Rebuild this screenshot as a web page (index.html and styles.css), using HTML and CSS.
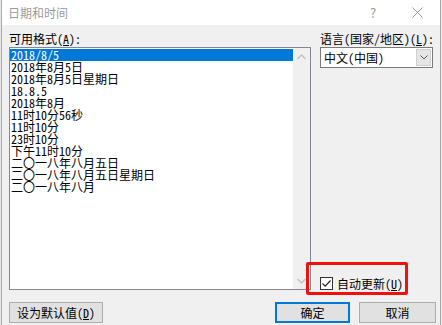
FILE: index.html
```html
<!DOCTYPE html>
<html lang="zh-CN">
<head>
    <meta charset="UTF-8">
    <title>日期和时间</title>
    <link rel="stylesheet" href="styles.css">
</head>
<body>
    <div class="window">
        <div class="titlebar">
            <span class="title">日期和时间</span>
            <span class="help">?</span>
            <span class="close">
                <svg width="11" height="11" viewBox="0 0 11 11"><path d="M0.5 0.5 L10.5 10.5 M10.5 0.5 L0.5 10.5" stroke="#9a9a9a" stroke-width="1" fill="none"/></svg>
            </span>
        </div>

        <div class="content">
            <div class="columns">
                <div class="left">
                    <div class="label">可用格式(<u>A</u>):</div>
                    <div class="listbox">
                        <ul class="items">
                            <li class="selected">2018/8/5</li>
                            <li>2018年8月5日</li>
                            <li>2018年8月5日星期日</li>
                            <li>18.8.5</li>
                            <li>2018年8月</li>
                            <li>11时10分56秒</li>
                            <li>11时10分</li>
                            <li>23时10分</li>
                            <li>下午11时10分</li>
                            <li>二〇一八年八月五日</li>
                            <li>二〇一八年八月五日星期日</li>
                            <li>二〇一八年八月</li>
                        </ul>
                        <div class="scrollbar">
                            <svg width="9" height="6" viewBox="0 0 9 6"><path d="M0.5 5 L4.5 1 L8.5 5" stroke="#c2c2c2" stroke-width="1.4" fill="none"/></svg>
                            <svg width="9" height="6" viewBox="0 0 9 6"><path d="M0.5 1 L4.5 5 L8.5 1" stroke="#c2c2c2" stroke-width="1.4" fill="none"/></svg>
                        </div>
                    </div>
                </div>

                <div class="right">
                    <div class="label">语言(国家/地区)(<u>L</u>):</div>
                    <div class="combo">
                        <span class="combo-text">中文(中国)</span>
                        <span class="drop">
                            <svg width="8" height="5" viewBox="0 0 8 5"><path d="M0.5 0.5 L4 4 L7.5 0.5" stroke="#555" stroke-width="1" fill="none"/></svg>
                        </span>
                    </div>
                    <div class="check">
                        <span class="box">
                            <svg width="11" height="11" viewBox="0 0 11 11"><path d="M1.5 5.5 L4.2 8.2 L9.5 2.5" stroke="#222" stroke-width="1.2" fill="none"/></svg>
                        </span>
                        <span>自动更新(<u>U</u>)</span>
                    </div>
                </div>
            </div>

            <div class="buttons">
                <button class="btn btn-wide">设为默认值(<u>D</u>)</button>
                <button class="btn btn-default">确定</button>
                <button class="btn btn-cancel">取消</button>
            </div>
        </div>

        <div class="highlight"></div>
    </div>
</body>
</html>
```

FILE: styles.css
```css
body { margin: 0; background: #e8e8e8; font-family: "Noto Sans Mono CJK SC", "Noto Sans CJK SC", sans-serif; font-size: 12px; color: #000; overflow: hidden; }
u { text-underline-offset: 1px; }

.window { position: relative; margin-left: 1px; width: 438px; height: 325px; background: #f0f0f0; border-left: 1px solid #a8a8a8; border-right: 1px solid #a8a8a8; }

.titlebar { height: 25px; background: #fff; display: flex; align-items: center; }
.title { padding-left: 6px; color: #9a9a9a; font-family: "Noto Sans CJK SC", sans-serif; font-size: 12px; }
.help { margin-left: auto; width: 10px; color: #9a9a9a; font-family: "Noto Sans CJK SC", sans-serif; font-size: 13px; text-align: center; }
.close { display: flex; margin-left: 34px; margin-right: 17px; }

.content { padding: 6px 0 0 7px; }
.columns { display: flex; }
.left { width: 302px; }
.label { height: 16px; line-height: 16px; white-space: nowrap; }

.listbox { box-sizing: border-box; height: 243px; border: 1px solid #828790; display: flex; }
.items { flex: 1; margin: 0; padding: 1px 0 0 0; list-style: none; background: #fff; }
.items li { height: 12px; line-height: 12px; padding-left: 1px; white-space: nowrap; }
.items li.selected { background: #0078d7; color: #fff; }
.scrollbar { width: 17px; background: #f0f0f0; display: flex; flex-direction: column; align-items: center; justify-content: space-between; padding: 6px 0 5px; }

.right { width: 113px; margin-left: 9px; display: flex; flex-direction: column; }
.combo { box-sizing: border-box; height: 21px; border: 1px solid #7a7a7a; background: #fff; display: flex; align-items: stretch; }
.combo-text { flex: 1; padding-left: 3px; line-height: 19px; }
.drop { width: 15px; margin: 1px; background: #e5e5e5; border: 1px solid #cfcfcf; box-sizing: border-box; display: flex; align-items: center; justify-content: center; }

.check { margin-top: auto; height: 13px; display: flex; align-items: center; gap: 4px; line-height: 13px; }
.box { box-sizing: border-box; width: 13px; height: 13px; border: 1px solid #333; background: #fff; display: flex; }

.buttons { display: flex; margin-top: 12px; padding-right: 4px; }
.btn { box-sizing: border-box; height: 21px; padding: 0; font-family: inherit; font-size: 12px; color: #000; background: #e1e1e1; border: 1px solid #adadad; }
.btn-wide { width: 94px; }
.btn-default { width: 75px; margin-left: auto; border: 2px solid #0078d7; }
.btn-cancel { width: 77px; margin-left: 9px; }

.highlight { position: absolute; left: 304px; top: 262px; width: 96px; height: 27px; border: 3px solid #f01010; border-radius: 2px; }
```
